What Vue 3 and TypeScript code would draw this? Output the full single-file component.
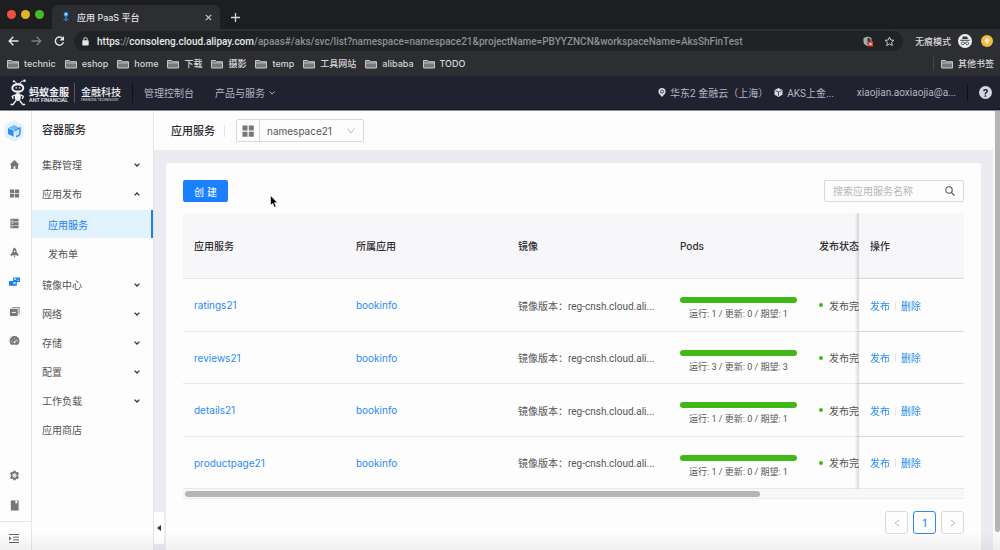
<script setup lang="ts">
import { ref } from 'vue'

interface MenuEntry {
  label: string
  expandable: boolean
  children?: string[]
}

interface Service {
  name: string
  app: string
  image: string
  pods: number
  status: string
}

const bookmarks: string[] = ['technic', 'eshop', 'home', '下载', '摄影', 'temp', '工具网站', 'alibaba', 'TODO']

const menu: MenuEntry[] = [
  { label: '集群管理', expandable: true },
  { label: '应用发布', expandable: true, children: ['应用服务', '发布单'] },
  { label: '镜像中心', expandable: true },
  { label: '网络', expandable: true },
  { label: '存储', expandable: true },
  { label: '配置', expandable: true },
  { label: '工作负载', expandable: true },
  { label: '应用商店', expandable: false },
]

const activeChild = ref('应用服务')
const keyword = ref('')
const image = '镜像版本：reg-cnsh.cloud.ali...'

const services: Service[] = [
  { name: 'ratings21', app: 'bookinfo', image, pods: 1, status: '发布完' },
  { name: 'reviews21', app: 'bookinfo', image, pods: 3, status: '发布完' },
  { name: 'details21', app: 'bookinfo', image, pods: 1, status: '发布完' },
  { name: 'productpage21', app: 'bookinfo', image, pods: 1, status: '发布完' },
]
</script>

<template>
  <div class="window">
    <div class="tabs">
      <div class="lights"><i class="red"></i><i class="yellow"></i><i class="green"></i></div>
      <div class="tab">
        <svg class="favicon" width="8" height="10" viewBox="0 0 8 10">
          <circle cx="4" cy="2.4" r="2.3" fill="#2f9bf0" />
          <circle cx="4" cy="2.3" r="1" fill="#d8f1ff" />
          <path d="M3 5h2v3.500l-1 1.200-1-1.200z" fill="#2a6fc4" />
          <path d="M1.500 7.500h1.500M5 7.500h1.500" stroke="#2c8f86" />
        </svg>
        <span class="tab-title">应用 PaaS 平台</span>
        <button class="plain" aria-label="关闭标签页">
          <svg width="7" height="7" viewBox="0 0 7 7"><path d="M.8.8l5.400 5.400M6.200.8L.8 6.200" stroke="#c9cbce" stroke-width="1.100" /></svg>
        </button>
      </div>
      <button class="plain new-tab" aria-label="新标签页">
        <svg width="9" height="9" viewBox="0 0 9 9"><path d="M4.500 0v9M0 4.500h9" stroke="#d5d7da" stroke-width="1.300" /></svg>
      </button>
    </div>

    <div class="toolbar">
      <button class="plain" aria-label="后退">
        <svg width="11" height="10" viewBox="0 0 11 10" fill="none" stroke="#e2e4e7" stroke-width="1.400"><path d="M10.500 5H1.200M5.300.8L1.200 5l4.100 4.200" /></svg>
      </button>
      <button class="plain" aria-label="前进">
        <svg width="11" height="10" viewBox="0 0 11 10" fill="none" stroke="#7c7e82" stroke-width="1.300"><path d="M.5 5h9.300M5.700.8L9.800 5 5.700 9.200" /></svg>
      </button>
      <button class="plain" aria-label="刷新">
        <svg width="11" height="10" viewBox="0 0 11 10" fill="none"><path d="M8.500 2.300A4.100 4.100 0 1 0 9.400 6.300" stroke="#e2e4e7" stroke-width="1.400" /><path d="M10 0v4.500H5.500z" fill="#e2e4e7" /></svg>
      </button>
      <div class="address">
        <svg width="7" height="9" viewBox="0 0 7 9"><rect x=".3" y="3.300" width="6.400" height="5.200" rx=".7" fill="#e4e6e8" /><path d="M1.800 3.500V2.300a1.700 1.700 0 0 1 3.400 0v1.200" fill="none" stroke="#e4e6e8" /></svg>
        <span class="url"><b>https</b>://<b>consoleng.cloud.alipay.com</b>/apaas#/aks/svc/list?namespace=namespace21&amp;projectName=PBYYZNCN&amp;workspaceName=AksShFinTest</span>
        <svg width="10" height="11" viewBox="0 0 10 11"><path d="M4.500.5L8.500 2v3.500c0 2-1.500 3.500-4 4.500C2 9 .5 7.500.5 5.500V2z" fill="#a9abae" /><path d="M4.500 1.800v7C6.500 8 7.500 7 7.500 5.300V2.900z" fill="#303337" /><rect x="5" y="5.500" width="5" height="5" fill="#dd3a2e" /><path d="M6.300 6.800l2.400 2.400M8.700 6.800L6.300 9.200" stroke="#fff" stroke-width=".9" /></svg>
        <svg class="star" width="11" height="11" viewBox="0 0 11 11"><path d="M5.500 1l1.300 3 3.200.3-2.400 2.100.7 3.200-2.800-1.700-2.800 1.700.7-3.200L1 4.300 4.200 4z" fill="none" stroke="#c3c5c8" stroke-width="1" /></svg>
      </div>
      <span class="incognito">无痕模式</span>
      <svg width="14" height="14" viewBox="0 0 14 14"><circle cx="7" cy="7" r="7" fill="#f1f2f3" /><path d="M4.800 2.600h4.400l.7 2.500H4.100zM2.200 5.800h9.600v.9H2.200z" fill="#35373a" /><g fill="none" stroke="#35373a" stroke-width=".8"><circle cx="4.800" cy="9.400" r="1.500" /><circle cx="9.200" cy="9.400" r="1.500" /><path d="M6.200 9h1.600" /></g></svg>
      <svg class="update" width="12" height="12" viewBox="0 0 12 12"><circle cx="6" cy="6" r="6" fill="#f3bd43" /><path d="M6 2.800L9 6 7.300 6.300V8.500H4.700V6.300L3 6z" fill="#fff4d4" /></svg>
    </div>

    <nav class="bookmarks">
      <a v-for="b in bookmarks" :key="b" href="#">
        <svg width="12" height="10" viewBox="0 0 12 10"><path d="M.5 8.500v-7h4l1 1.200h6v6.300H.5z" fill="#77797c" stroke="#c6c8ca" /><path d="M.5 4h11" stroke="#c6c8ca" stroke-width=".8" /></svg>{{ b }}
      </a>
      <a href="#" class="others">
        <svg width="12" height="10" viewBox="0 0 12 10"><path d="M.5 8.500v-7h4l1 1.200h6v6.300H.5z" fill="#77797c" stroke="#c6c8ca" /><path d="M.5 4h11" stroke="#c6c8ca" stroke-width=".8" /></svg>其他书签
      </a>
    </nav>

    <header class="topbar">
      <svg class="ant" width="18" height="27" viewBox="0 0 18 27" fill="none" stroke="#eef0f4">
        <path d="M7.500 5.500C7.500 3.500 6.500 2.500 5 2.300M10.500 5.500c.3-2 1.700-3.200 4-3.500" />
        <g fill="#eef0f4" stroke="none">
          <circle cx="4.800" cy="2.300" r="1.100" /><circle cx="15.500" cy="1.800" r="1.300" />
          <ellipse cx="8.800" cy="9" rx="6.500" ry="4.900" />
          <ellipse cx="8.800" cy="18" rx="3" ry="4" />
        </g>
        <ellipse cx="8.800" cy="9" rx="4.500" ry="2.600" fill="#20222f" stroke="none" />
        <path d="M6.500 8.800h1.500M9.800 8.800h1.500" stroke-width="1.300" />
        <path d="M6.500 15.800L3.200 17.300l1 2.700M11.300 15.800l3 1.500-1 2.700M7 21.500L4 25.500H1.500M10.700 21.500l3 4h2.500" stroke-width="1.300" />
      </svg>
      <div class="brand"><strong>蚂蚁金服</strong><small>ANT FINANCIAL</small></div>
      <div class="brand second"><strong>金融科技</strong><small>FINANCIAL TECHNOLOGY</small></div>
      <a class="console" href="#">管理控制台</a>
      <a class="products" href="#">产品与服务
        <svg width="6" height="4" viewBox="0 0 6 4"><path d="M.5.5L3 3 5.500.5" fill="none" stroke="#a9acb8" /></svg>
      </a>
      <a class="region" href="#">
        <svg width="8" height="9" viewBox="0 0 8 9"><path d="M4 0a3.600 3.600 0 0 1 3.600 3.600C7.600 6 5.500 7.500 4 9 2.500 7.500.4 6 .4 3.600A3.600 3.600 0 0 1 4 0z" fill="#d4d7df" /><circle cx="4" cy="3.600" r="1.500" fill="none" stroke="#282b39" stroke-width=".8" /></svg>华东2 金融云（上海）
      </a>
      <a class="workspace" href="#">
        <svg width="9" height="9" viewBox="0 0 9 9"><path d="M4.500 0l4 2v4.800l-4 2.200-4-2.200V2z" fill="#d4d7df" /><path d="M1.500 2.600l3 1.500 3-1.500M4.500 4.100v3.800" fill="none" stroke="#282b39" stroke-width=".8" /></svg>AKS上金...
      </a>
      <a class="user" href="#">xiaojian.aoxiaojia@a...</a>
      <i class="bar-split"></i>
      <button class="help" aria-label="帮助">?</button>
    </header>

    <div class="shell">
      <aside class="rail">
        <svg class="rail-logo" width="20" height="22" viewBox="0 0 20 22">
          <path d="M10 0l9.500 5.500v11L10 22 .5 16.500v-11z" fill="#e1f0fb" />
          <path d="M10 5l5.300 2.500L10 10 4.700 7.500z" fill="#6db9f7" />
          <path d="M4 8l5.600 2.600v6.200L4 14z" fill="#2f8ff0" />
          <path d="M10.500 10.600L16 8v5c0 2-2 3.500-4 3.200" fill="#cce6fb" stroke="#2488f4" stroke-width="1.300" />
        </svg>
        <div class="rail-icons">
          <svg viewBox="0 0 12 12"><path d="M6 1l5.300 5.200H9.800V11H7V8H5v3H2.200V6.200H.7z" /></svg>
          <svg viewBox="0 0 12 12"><path d="M1 1.500h4.600v4H1zM6.400 1.500H11v4H6.400zM1 6.400h4.600v4H1zM6.400 6.400H11v4H6.400z" /></svg>
          <svg viewBox="0 0 12 12"><path d="M1.500.8h9v3h-9zM1.500 4.500h9v3h-9zM1.500 8.200h9v3h-9z" /><path d="M3 2.300h1.200M3 6h1.200M3 9.700h1.200" stroke="#fff" /></svg>
          <svg viewBox="0 0 12 12"><path d="M6 .5c2 1.500 2.400 3.500 2.300 5l1.900 2.500v2L8 9H4L1.800 10V8l1.900-2.500C3.600 4 4 2 6 .5zM5 9.500h2L6 11.700z" /><circle cx="6" cy="4.800" r=".9" fill="#fff" /></svg>
          <svg class="current" viewBox="0 0 12 12"><path d="M4.500 1.500H12v5H8.500v4H0v-5h4.500z" /><path d="M5.700 2.700h2v1.500h-2zM9.300 4h1.500v1.300H9.300zM4.800 6.700h2.400v1.800H4.800z" fill="#fff" /></svg>
          <svg viewBox="0 0 12 12"><path d="M3.500 1h8v8h-1V2h-7zM1 3h8.500v8H1z" /><path d="M3 7h4.500" stroke="#fff" /></svg>
          <svg viewBox="0 0 12 12"><path d="M2.300 10.500A5.400 5.400 0 1 1 9.700 10.500z" /><path d="M6 8l2.500-3M2.500 7h1M8.500 7h1M3.500 4.300l.6.6M6 3v1" stroke="#fff" stroke-width=".9" /><circle cx="6" cy="8" r="1" fill="#fff" /></svg>
        </div>
        <div class="rail-tools">
          <svg viewBox="0 0 12 12"><path d="M4.800.8h2.400l.5 1.600 1.500-.5 1.800 2L9.900 5.200v1.600L11 8.100l-1.800 2-1.500-.5-.5 1.600H4.800l-.5-1.600-1.500.5-1.800-2 1.100-1.300V5.200L1 3.900l1.800-2 1.500.5z" /><circle cx="6" cy="6" r="1.800" fill="#ccc" stroke="#fff" /></svg>
          <svg viewBox="0 0 12 12"><path d="M2 .5h8.500v11H2z" /><path d="M7 .5h2v3.500L8 3.300l-1 .7z" fill="#fff" /></svg>
        </div>
        <button class="rail-fold plain" aria-label="展开导航">
          <svg width="10" height="9" viewBox="0 0 10 9"><path d="M0 .5h10M4 3.200h6M4 5.800h6M0 8.500h10" stroke="#666" /><path d="M0 2.500l2.500 2L0 6.500z" fill="#666" /></svg>
        </button>
      </aside>

      <aside class="menu">
        <h2>容器服务</h2>
        <ul>
          <li v-for="m in menu" :key="m.label">
            <a href="#" class="entry">{{ m.label }}
              <svg v-if="m.expandable" width="6" height="4" viewBox="0 0 6 4" :class="{ up: m.children }"><path d="M.6.6L3 3 5.400.6" fill="none" stroke="#333" stroke-width="1.300" /></svg>
            </a>
            <ul v-if="m.children" class="sub">
              <li v-for="c in m.children" :key="c"><a href="#" :class="{ active: c === activeChild }" @click.prevent="activeChild = c">{{ c }}</a></li>
            </ul>
          </li>
        </ul>
      </aside>

      <main>
        <button class="fold" aria-label="收起菜单"><svg width="4" height="6" viewBox="0 0 4 6"><path d="M4 0v6L0 3z" fill="#333" /></svg></button>
        <div class="page-head">
          <h1>应用服务</h1>
          <div class="namespace">
            <label for="ns" aria-label="命名空间"><svg width="12" height="12" viewBox="0 0 12 12"><path d="M.5.500h5v5h-5zM6.800.5h5v5h-5zM.5 6.800h5v5h-5zM6.800 6.800h5v5h-5z" fill="#777" /></svg></label>
            <select id="ns"><option>namespace21</option></select>
            <svg class="arrow" width="8" height="6" viewBox="0 0 8 6"><path d="M.5.500L4 5 7.500.5" fill="none" stroke="#bbb" /></svg>
          </div>
        </div>

        <section class="card">
          <div class="actions">
            <button class="create">创 建</button>
            <div class="search">
              <input v-model="keyword" type="text" placeholder="搜索应用服务名称" aria-label="搜索应用服务名称" />
              <svg width="10" height="10" viewBox="0 0 10 10" fill="none" stroke="#555" stroke-width="1.100"><circle cx="4" cy="4" r="3.200" /><path d="M6.300 6.300L9.500 9.500" /></svg>
            </div>
          </div>

          <div class="table-area">
            <table>
              <colgroup><col class="wide" /><col class="wide" /><col class="wide" /><col class="pods" /><col /><col class="ops" /></colgroup>
              <thead>
                <tr><th>应用服务</th><th>所属应用</th><th>镜像</th><th>Pods</th><th>发布状态</th><th class="fixed">操作</th></tr>
              </thead>
              <tbody>
                <tr v-for="s in services" :key="s.name">
                  <td><a href="#">{{ s.name }}</a></td>
                  <td><a href="#">{{ s.app }}</a></td>
                  <td class="image">{{ s.image }}</td>
                  <td class="usage">
                    <div class="bar"></div>
                    <div class="counts">运行: {{ s.pods }} / 更新: 0 / 期望: {{ s.pods }}</div>
                  </td>
                  <td><span class="status">{{ s.status }}</span></td>
                  <td class="fixed"><a href="#">发布</a><i class="sep"></i><a href="#">删除</a></td>
                </tr>
              </tbody>
            </table>
          </div>
          <div class="scroll"><div class="thumb"></div></div>

          <div class="pager">
            <button aria-label="上一页"><svg width="6" height="8" viewBox="0 0 6 8"><path d="M5.500.8L1 4l4.500 3.200" fill="none" stroke="#bbb" /></svg></button>
            <button class="on">1</button>
            <button aria-label="下一页"><svg width="6" height="8" viewBox="0 0 6 8"><path d="M.5.800L5 4 .5 7.200" fill="none" stroke="#bbb" /></svg></button>
          </div>
        </section>
      </main>
      <div class="page-scroll"><div></div></div>
    </div>
    <div class="shade"></div>
    <svg class="cursor" width="8" height="13" viewBox="0 0 8 13"><path d="M.5.500v9.800l2.200-2 1.700 3.900 1.700-.8-1.700-3.700h3z" fill="#000" stroke="#fff" stroke-width=".6" /></svg>
  </div>
</template>

<style>
body { margin: 0; }
</style>

<style scoped>
.window {
  position: relative;
  display: flex;
  flex-direction: column;
  height: 100vh;
  overflow: hidden;
  font-family: Inter, "Noto Sans CJK SC", sans-serif;
  font-size: 10px;
  color: #555;
  background: #fdfdfe;
}
.window *, .window *::before { box-sizing: border-box; }
svg { display: block; flex: none; }
a { color: inherit; text-decoration: none; }
ul { list-style: none; margin: 0; padding: 0; }
h1, h2 { margin: 0; font-size: 11px; font-weight: 500; color: #2c2c2e; }
button, input, select { font: inherit; }
button { display: flex; align-items: center; justify-content: center; padding: 0; }
.plain { border: 0; background: none; }

.tabs { display: flex; align-items: flex-end; height: 29px; background: #1c1e20; flex: none; }
.lights { display: flex; gap: 5px; width: 52px; padding-left: 7px; height: 29px; align-items: center; }
.lights i { width: 9px; height: 9px; border-radius: 50%; }
.red { background: #f2503f; }
.yellow { background: #e3b128; }
.green { background: #47b92b; }
.tab { display: flex; align-items: center; width: 168px; height: 24px; padding: 0 8px 0 10px; border-radius: 6px 6px 0 0; background: #2d2e31; color: #e2e3e5; font-size: 9px; font-weight: 500; }
.tab-title { flex: 1; margin-left: 7px; }
.new-tab { height: 24px; margin-left: 11px; }

.toolbar { display: flex; align-items: center; height: 24px; padding: 0 7px 0 8px; background: #2d2e31; flex: none; gap: 12px; }
.address { flex: 1; display: flex; align-items: center; height: 20px; margin-left: -3px; padding: 0 8px 0 8px; border-radius: 10px; background: #202325; }
.url { flex: 1; min-width: 0; margin-left: 8px; overflow: hidden; white-space: nowrap; font-family: Roboto, sans-serif; font-size: 10px; font-weight: 500; color: #8e9093; }
.url b { font-weight: 500; color: #e6e7e9; }
.star { margin-left: 11px; }
.incognito { color: #d9dadc; font-size: 9px; font-weight: 500; }
.toolbar .incognito + svg { margin-left: -5px; }
.update { margin-left: -3px; }

.bookmarks { display: flex; align-items: center; gap: 9px; height: 23px; padding: 0 6px 2px 7px; background: #2d2e31; color: #d6d7d9; font-size: 9px; font-weight: 500; flex: none; }
.bookmarks a { display: flex; align-items: center; gap: 5px; white-space: nowrap; }
.bookmarks .others { margin-left: auto; padding-left: 7px; border-left: 1px solid #444548; }

.topbar { display: flex; align-items: center; height: 34px; padding: 0 8px 0 9px; background: #20222f; border-bottom: 1px solid #171824; color: #b4b6c2; flex: none; }
.brand { display: flex; flex-direction: column; margin-left: 2px; padding: 3px 5px 0 0; border-right: 1px solid #535665; color: #eef0f4; line-height: 1; white-space: nowrap; }
.brand strong { font-size: 10px; font-weight: 700; line-height: 12px; }
.brand small { font-size: 5px; font-weight: 600; line-height: 5px; }
.brand.second { margin-left: 6px; padding-right: 11px; border-color: #10111b; }
.brand.second strong { font-weight: 500; }
.brand.second small { font-size: 3px; font-weight: 400; }
.topbar a { display: flex; align-items: center; gap: 4px; white-space: nowrap; }
.console { margin-left: 11px; }
.topbar .products { margin-left: 21px; }
.topbar .region { margin-left: auto; font-family: Roboto, "Noto Sans CJK SC", sans-serif; }
.workspace { margin-left: 6px; font-family: Roboto, "Noto Sans CJK SC", sans-serif; }
.user { margin-left: 23px; font-family: Roboto, sans-serif; }
.bar-split { width: 1px; height: 17px; margin: 0 11px; background: #10111b; }
.help { width: 13px; height: 13px; border: 0; border-radius: 50%; background: #d4d7df; color: #20222f; font-weight: 700; }

.shell { flex: 1; min-height: 0; display: flex; border-top: 1px solid #8c8b94; }
.rail { display: flex; flex-direction: column; align-items: center; width: 32px; padding: 9px 3px 0 0; border-right: 1px solid #e6e6ea; flex: none; }
.rail-icons, .rail-tools { display: flex; flex-direction: column; justify-content: space-between; height: 187px; margin-top: 17px; }
.rail-icons svg, .rail-tools svg { width: 11px; height: 11px; fill: #777; }
.rail-icons .current { fill: #1a80f5; }
.rail-tools { height: 41px; margin-top: auto; }
.rail-fold { align-self: stretch; height: 29px; margin: 10px -3px 0 0; padding-top: 4px; padding-right: 3px; border-top: 1px solid #e6e6ea; }

.menu { width: 122px; border-right: 1px solid #e6e6ea; flex: none; }
.menu h2 { height: 39px; padding-left: 10px; line-height: 39px; }
.menu .entry { display: flex; align-items: center; justify-content: space-between; height: 29px; padding: 0 13px 0 10px; }
.up { transform: rotate(180deg); }
.sub { display: flex; flex-direction: column; gap: 1px; padding: 2px 0 3px; }
.sub a { display: flex; align-items: center; height: 28px; padding-left: 16px; border-right: 2px solid transparent; }
.sub .active { color: #1a80f5; background: #e1f2fc; border-color: #1a80f5; }

main { position: relative; flex: 1; min-width: 0; display: flex; flex-direction: column; background: #ebecf1; }
.fold { position: absolute; left: 0; bottom: 6px; width: 10px; height: 32px; border: 0; background: #fff; }
.page-head { display: flex; align-items: center; height: 39px; padding-left: 17px; background: #fdfdfe; flex: none; }
.page-head h1 { padding-right: 9px; border-right: 1px solid #e4e4e8; line-height: 12px; }
.namespace { position: relative; display: flex; align-items: center; width: 128px; height: 23px; margin-left: 11px; border: 1px solid #d9d9dc; border-radius: 2px; }
.namespace label { display: flex; align-items: center; justify-content: center; width: 23px; height: 21px; border-right: 1px solid #d9d9dc; }
.namespace select { flex: 1; height: 21px; padding: 0 7px; border: 0; appearance: none; background: none; color: #555; }
.arrow { position: absolute; right: 8px; pointer-events: none; }

.card { flex: 1; margin: 13px 12px 0; padding: 17px; background: #fdfdfe; border-radius: 2px 2px 0 0; }
.actions { display: flex; justify-content: space-between; height: 33px; }
.create { width: 45px; height: 22px; border: 0; border-radius: 2px; background: #1a80ff; color: #fff; }
.search { display: flex; align-items: center; width: 140px; height: 22px; padding-right: 8px; border: 1px solid #d9d9dc; border-radius: 2px; }
.search input { flex: 1; min-width: 0; padding: 0 8px; border: 0; outline: 0; background: none; color: #555; }
.search input::placeholder { color: #b5b5b9; }

.table-area { overflow: hidden; }
table { width: 1050px; table-layout: fixed; border-collapse: separate; border-spacing: 0; }
.wide { width: 162px; }
.pods { width: 139px; }
.ops { width: 105px; }
th, td { padding: 0 11px; border-bottom: 1px solid #e8e8eb; text-align: left; white-space: nowrap; }
th { height: 66px; background: #f7f7f9; color: #2c2c2e; font-weight: 500; }
td { height: 52px; }
tbody tr:nth-child(odd) td { height: 53px; }
td a { color: #2b8bf2; }
.image, .counts { font-family: Roboto, "Noto Sans CJK SC", sans-serif; }
.fixed { position: sticky; right: 0; background: #fdfdfe; box-shadow: -2px 0 3px rgba(0, 0, 0, 0.16); }
th.fixed { background: #f7f7f9; }
.usage { padding-top: 8px; }
.bar { height: 6px; border-radius: 3px; background: #41b817; }
.counts { margin-top: 4px; font-size: 9px; line-height: 14px; text-align: center; }
.status { display: flex; align-items: center; gap: 6px; }
.status::before { content: ""; width: 4px; height: 4px; border-radius: 50%; background: #41b817; }
.sep { display: inline-block; width: 1px; height: 8px; margin: 0 5px; background: #e4e4e8; }
.scroll { height: 10px; padding: 2px; background: #f7f7f8; border-bottom: 1px solid #ececee; }
.thumb { width: 74%; height: 6px; border-radius: 3px; background: #b5b5b6; }

.pager { display: flex; justify-content: flex-end; gap: 5px; margin-top: 12px; }
.pager button { width: 23px; height: 23px; border: 1px solid #d9d9dc; border-radius: 3px; background: #fdfdfe; color: #2b8bf2; font-weight: 500; }
.pager .on { border-color: #2b8bf2; }

.page-scroll { width: 7px; padding-left: 2px; background: #fafafa; flex: none; }
.page-scroll div { height: 96%; border-radius: 0 0 3px 3px; background: #b5b5b6; }
.shade { position: absolute; left: 0; right: 0; bottom: 0; height: 18px; background: linear-gradient(rgba(0, 0, 0, 0), rgba(0, 0, 0, 0.05)); pointer-events: none; }
.cursor { position: absolute; left: 270px; top: 195px; pointer-events: none; }
</style>
